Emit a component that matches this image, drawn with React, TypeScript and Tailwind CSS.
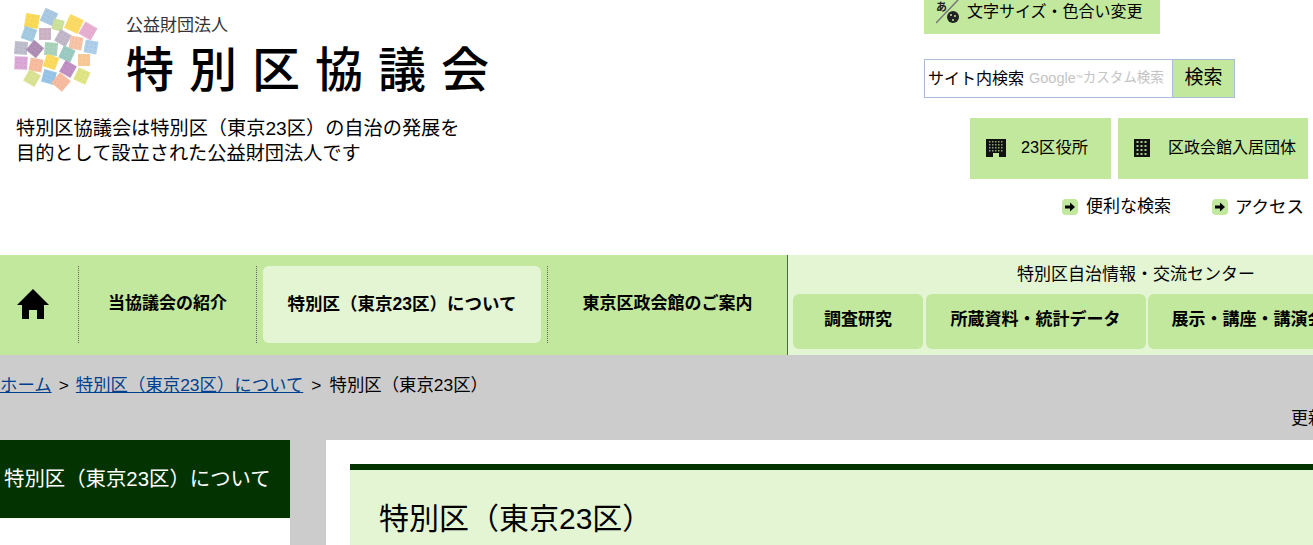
import { ReactNode } from "react";

const squares: [number, number, number, number, string, string][] = [
  [32, 21, 14, 10, "#f9d648", "#f5cb45"],
  [49, 17, 14, 25, "#a3c4e0", "#8bb3d8"],
  [58, 25, 11, 15, "#c4e08f", "#dcc0a8"],
  [74, 24, 15, 25, "#fbd756", "#f6cc50"],
  [88, 31, 14, 30, "#e5a7cc", "#d898c4"],
  [29, 34, 13, 20, "#9cc6dd", "#86b4d6"],
  [45, 34, 12, 0, "#c8aebf", "#ac98b8"],
  [63, 38, 13, 30, "#bcb1c4", "#a8a0b4"],
  [76, 43, 13, 10, "#f6bf9e", "#f2ae90"],
  [91, 47, 13, 10, "#a8cbe8", "#8fbae0"],
  [21, 48, 13, 5, "#b9b7c8", "#a6a4ba"],
  [35, 49, 13, 40, "#a985ad", "#94749e"],
  [51, 49, 13, 5, "#a3cfb5", "#90c0a8"],
  [67, 54, 13, 25, "#93c6bb", "#82b8b0"],
  [84, 60, 12, 0, "#f7c58d", "#f0b280"],
  [21, 63, 13, 3, "#d8a0d2", "#c88cc8"],
  [36, 65, 13, 10, "#f6b795", "#f0a688"],
  [51, 62, 13, 20, "#fbd64f", "#f6cc48"],
  [68, 69, 13, 30, "#bb86c0", "#a674b0"],
  [82, 76, 13, 25, "#dde37a", "#ccd568"],
  [32, 78, 13, 30, "#d6e08a", "#c6d478"],
  [49, 77, 13, 15, "#8fbfe4", "#7aaedc"],
  [61, 82, 14, 40, "#f5b598", "#f0a68a"],
];

function Logo() {
  return (
    <svg width="110" height="100" viewBox="0 0 110 100" className="shrink-0 opacity-90 blur-[0.4px]">
      {squares.map(([x, y, s, r, c, d], i) => (
        <g key={i} transform={`rotate(${r} ${x} ${y})`}>
          <rect x={x - s / 2} y={y - s / 2} width={s} height={s} fill={c} />
          {[-4, 0, 4].map((a) =>
            [-4, 0, 4].map((b) => <circle key={`${a}${b}`} cx={x + a} cy={y + b} r="0.7" fill={d} />),
          )}
        </g>
      ))}
    </svg>
  );
}

function Arrow() {
  return (
    <svg width="16" height="16" viewBox="0 0 16 16" className="shrink-0">
      <rect width="16" height="16" rx="4" fill="#c2e89e" />
      <path d="M3 6.5h5V3.5L13 8l-5 4.5V9.5H3z" fill="#000" />
    </svg>
  );
}

function HomeIcon() {
  return (
    <svg width="32" height="30" viewBox="0 0 32 30">
      <path d="M16 0 32 16h-5v14h-7v-9h-8v9H5V16H0z" fill="#000" />
    </svg>
  );
}

function WardIcon() {
  return (
    <svg width="20" height="18" viewBox="0 0 20 18">
      <path d="M0 0h20v18h-7v-4H7v4H0z" fill="#111" />
      {[3, 6, 9, 12, 15].map((x) =>
        [2, 5, 8, 11].map((y) => <rect key={`${x}${y}`} x={x} y={y} width="1.5" height="1.5" fill="#8aa870" />),
      )}
    </svg>
  );
}

function TowerIcon() {
  return (
    <svg width="16" height="18" viewBox="0 0 16 18">
      <rect width="16" height="18" fill="#111" />
      {[2.5, 6.5, 10.5].map((x) =>
        [2, 6, 10, 14].map((y) => <rect key={`${x}${y}`} x={x} y={y} width="2" height="2" fill="#a6c888" />),
      )}
    </svg>
  );
}

function StyleIcon() {
  return (
    <svg width="24" height="24" viewBox="0 0 24 24" className="shrink-0">
      <path d="M0 23 22 0" stroke="#777" strokeWidth="1.5" />
      <text x="0" y="10.5" fontSize="11" fontWeight="700" fontFamily="'Noto Sans CJK JP', sans-serif" fill="#222">
        あ
      </text>
      <circle cx="17" cy="17" r="6" fill="#222" />
      <circle cx="15" cy="15" r="1" fill="#c2e89e" />
      <circle cx="19" cy="16" r="1" fill="#c2e89e" />
      <circle cx="17" cy="20" r="1" fill="#c2e89e" />
    </svg>
  );
}

function NavSep() {
  return <div className="h-[77px] w-px shrink-0 border-l border-dotted border-[#666]" />;
}

function NavCell({ width, active, children }: { width: string; active?: boolean; children: ReactNode }) {
  return (
    <div className={`flex h-[77px] shrink-0 items-center justify-center rounded-md font-bold ${width} ${active ? "bg-[#e4f5d4] text-[17.5px]" : "text-[17px]"}`}>
      {children}
    </div>
  );
}

function Tab({ width, children }: { width: string; children: ReactNode }) {
  return (
    <div className={`flex h-[55px] shrink-0 items-center justify-center whitespace-nowrap rounded-md bg-[#c2e89e] pb-[3px] text-[17px] font-bold ${width}`}>
      {children}
    </div>
  );
}

export default function App() {
  return (
    <div className="h-[545px] w-[1313px] overflow-hidden bg-white font-['Liberation_Sans','Noto_Sans_CJK_JP',sans-serif] text-black">
      {/* ヘッダー */}
      <header className="flex h-[255px]">
        <div className="w-[924px] shrink-0">
          <div className="flex">
            <Logo />
            <div className="ml-[16px] pt-[15px]">
              <p className="text-[17px] leading-[22px] text-[#333]">公益財団法人</p>
              <p className="mt-[4px] whitespace-nowrap text-[48px] font-medium leading-[60px] tracking-[15px]">特別区協議会</p>
            </div>
          </div>
          <p className="ml-[16px] mt-[15px] text-[19.2px] leading-[25px]">
            特別区協議会は特別区（東京23区）の自治の発展を
            <br />
            目的として設立された公益財団法人です
          </p>
        </div>
        <div className="flex-1">
          <div className="flex h-[34px] w-[236px] items-center gap-[7px] bg-[#c2e89e] pb-[10px] pl-[12px] text-[16px]">
            <StyleIcon />
            文字サイズ・色合い変更
          </div>
          <div className="mt-[25px] flex h-[39px]">
            <div className="flex w-[249px] items-center whitespace-nowrap border border-[#a9bcd8] pl-[3px] text-[16px]">
              サイト内検索
              <span className="ml-[5px] text-[14.5px] text-[#c4c4c4]">Google</span>
              <span className="text-[7px] text-[#c4c4c4]">™</span>
              <span className="text-[13.5px] text-[#c4c4c4]">カスタム検索</span>
            </div>
            <div className="flex w-[62px] items-center justify-center border border-[#a9bcd8] border-l-0 bg-[#c2e89e] text-[19px]">
              検索
            </div>
          </div>
          <div className="ml-[46px] mt-[20px] flex gap-[7px] text-[16px]">
            <div className="flex h-[61px] w-[141px] items-center gap-[15px] bg-[#c2e89e] pb-[2px] pl-[16px] text-[16.3px]">
              <WardIcon />
              23区役所
            </div>
            <div className="flex h-[61px] w-[190px] items-center gap-[18px] bg-[#c2e89e] pb-[2px] pl-[16px]">
              <TowerIcon />
              区政会館入居団体
            </div>
          </div>
          <div className="ml-[138px] mt-[17px] flex gap-[41px] whitespace-nowrap text-[17px] leading-[22px]">
            <span className="flex items-center gap-[8px]">
              <Arrow />
              便利な検索
            </span>
            <span className="flex items-center gap-[7px] text-[17.5px]">
              <Arrow />
              アクセス
            </span>
          </div>
        </div>
      </header>

      {/* グローバルナビ */}
      <nav className="flex h-[100px] whitespace-nowrap">
        <div className="flex w-[787px] shrink-0 items-center bg-[#c2e89e] pb-[2px]">
          <div className="flex w-[78px] shrink-0 justify-center pr-[12px]">
            <HomeIcon />
          </div>
          <NavSep />
          <NavCell width="w-[177px]">当協議会の紹介</NavCell>
          <NavSep />
          <div className="w-[6px] shrink-0" />
          <NavCell width="w-[278px]" active>
            特別区（東京23区）について
          </NavCell>
          <div className="w-[6px] shrink-0" />
          <NavSep />
          <NavCell width="w-[239px]">東京区政会館のご案内</NavCell>
        </div>
        <div className="flex-1 border-l border-[#4f6b45] bg-[#e4f5d4] pl-[5px]">
          <p className="h-[39px] w-[686px] pt-[8px] text-center text-[17px] leading-[24px]">特別区自治情報・交流センター</p>
          <div className="flex gap-[2.5px]">
            <Tab width="w-[130px]">調査研究</Tab>
            <Tab width="w-[220px]">所蔵資料・統計データ</Tab>
            <Tab width="w-[200px]">展示・講座・講演会</Tab>
          </div>
        </div>
      </nav>

      {/* 本文 */}
      <div className="h-[190px] bg-[#cccccc]">
        <p className="h-[60px] whitespace-nowrap pt-[18px] text-[17.4px] leading-[24px]">
          <a className="text-[#003f8e] underline">ホーム</a>
          <span className="mx-[7px]">&gt;</span>
          <a className="text-[#003f8e] underline">特別区（東京23区）について</a>
          <span className="mx-[8px]">&gt;</span>特別区（東京23区）
        </p>
        <p className="h-[25px] whitespace-nowrap pl-[1291px] text-[17px] leading-[8px]">更新日</p>
        <div className="flex">
          <aside className="h-[105px] w-[290px] shrink-0 bg-white">
            <div className="flex h-[78px] items-center whitespace-nowrap bg-[#033300] pl-[4px] text-[20.4px] text-white">
              特別区（東京23区）について
            </div>
          </aside>
          <main className="ml-[36px] h-[105px] flex-1 bg-white pl-[24px] pt-[24px]">
            <div className="h-[81px] border-t-[6px] border-[#033300] bg-[#e4f5d4] pl-[29px] pt-[28px]">
              <h1 className="text-[30px] leading-[42px]">特別区（東京23区）</h1>
            </div>
          </main>
        </div>
      </div>
    </div>
  );
}
